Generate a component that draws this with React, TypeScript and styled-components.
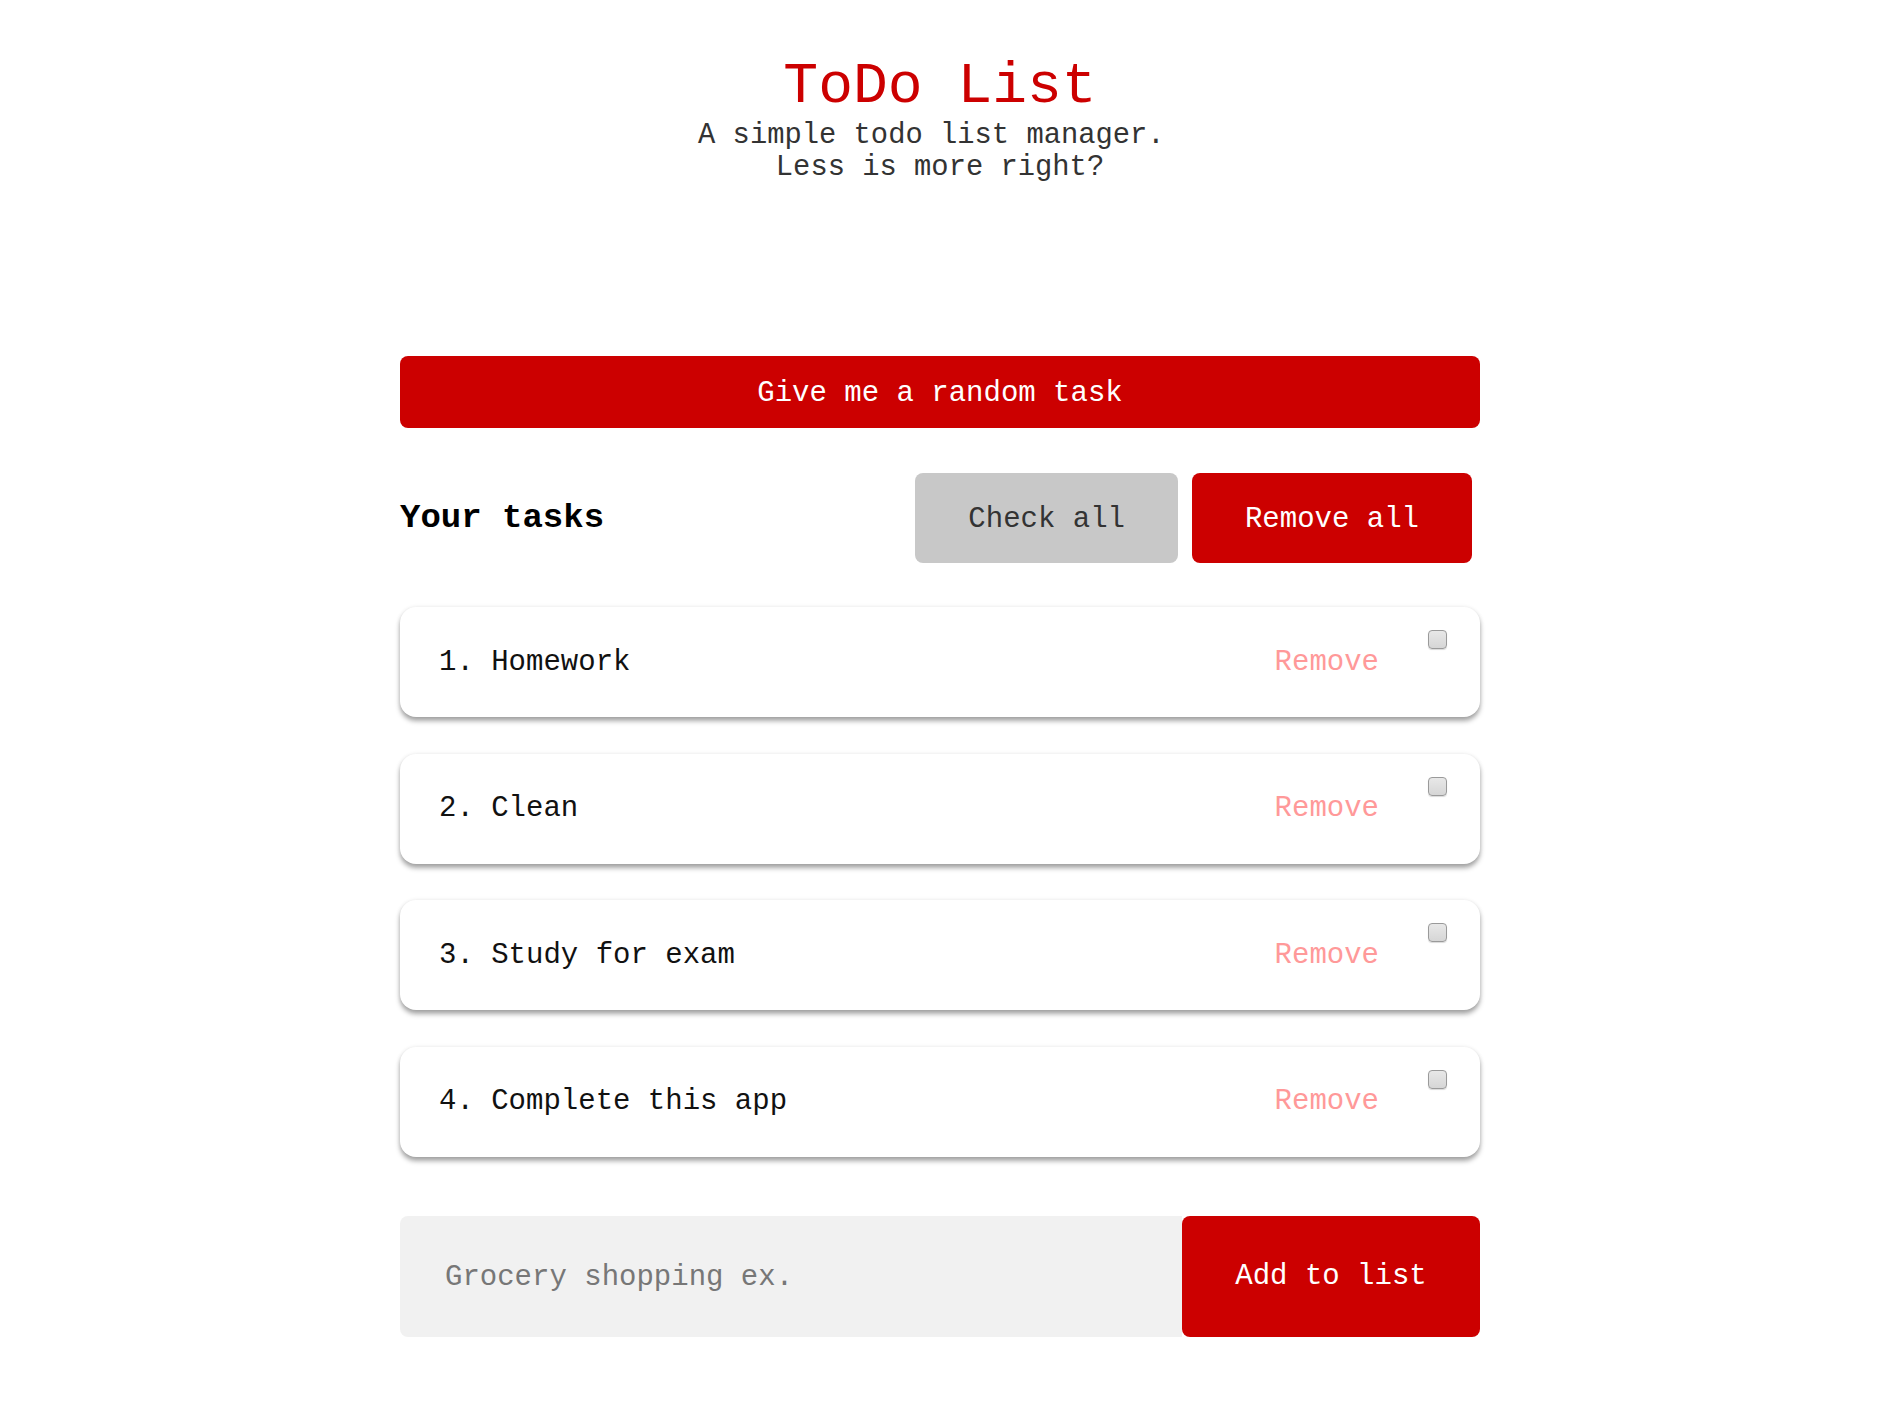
import React, { useState } from "react";
import styled, { createGlobalStyle } from "styled-components";

const RED = "#cc0000";
const FONT = `"Liberation Mono", "DejaVu Sans Mono", monospace`;

const GlobalStyle = createGlobalStyle`
  html, body { margin: 0; padding: 0; background: #ffffff; }
  body { font-family: ${FONT}; color: #222; }
  * { box-sizing: border-box; }
`;

const Page = styled.div`
  width: 1880px;
  padding-top: 54px;
  padding-bottom: 80px;
  display: flex;
  flex-direction: column;
  align-items: center;
`;

const Header = styled.header`
  text-align: center;
  margin-bottom: 172px;
`;

const Title = styled.h1`
  margin: 0;
  font-family: ${FONT};
  font-weight: 400;
  font-size: 58px;
  line-height: 66px;
  color: ${RED};
`;

const Subtitle = styled.p`
  margin: 0;
  font-family: ${FONT};
  font-size: 28.8px;
  line-height: 32px;
  color: #333;
  white-space: pre;
`;

const Main = styled.main`
  width: 1080px;
  display: flex;
  flex-direction: column;
`;

const Button = styled.button<{ $variant?: "primary" | "muted" }>`
  border: none;
  border-radius: 8px;
  font-family: ${FONT};
  font-size: 29px;
  cursor: pointer;
  background: ${(p) => (p.$variant === "muted" ? "#c8c8c8" : RED)};
  color: ${(p) => (p.$variant === "muted" ? "#333" : "#fff")};
`;

const RandomButton = styled(Button)`
  width: 100%;
  height: 72px;
  padding-top: 4px;
  margin-bottom: 45px;
`;

const TasksHeader = styled.div`
  display: flex;
  align-items: center;
  height: 90px;
  margin-bottom: 44px;
`;

const TasksTitle = styled.h2`
  margin: 0;
  flex: 1;
  font-family: ${FONT};
  font-weight: 700;
  font-size: 34px;
  color: #000;
`;

const HeaderButtons = styled.div`
  display: flex;
  gap: 14px;
  margin-right: 8px;
`;

const HeaderButton = styled(Button)`
  height: 90px;
  padding: 2px 53px 0;
`;

const TaskList = styled.ol`
  list-style: none;
  margin: 0 0 59px;
  padding: 0;
  display: flex;
  flex-direction: column;
  gap: 36.5px;
`;

const TaskCard = styled.li`
  height: 110px;
  display: flex;
  align-items: center;
  padding: 0 33px 0 39px;
  background: #fff;
  border-radius: 16px;
  box-shadow: 0 0 4px rgba(0, 0, 0, 0.08), 0 4px 5px rgba(0, 0, 0, 0.35);
`;

const TaskText = styled.span`
  flex: 1;
  font-size: 29px;
  color: #111;
`;

const RemoveLink = styled.button`
  border: none;
  background: none;
  padding: 0;
  font-family: ${FONT};
  font-size: 29px;
  color: #ff9999;
  cursor: pointer;
`;

const Check = styled.input`
  appearance: none;
  align-self: flex-start;
  margin: 23px 0 0 49px;
  width: 19px;
  height: 19px;
  border: 1.5px solid #9a9a9a;
  border-radius: 4px;
  background: linear-gradient(#e8e8e8, #d6d6d6);
  box-shadow: 0 1px 1px rgba(0, 0, 0, 0.15);
  &:checked {
    background: ${RED};
    border-color: ${RED};
  }
`;

const AddForm = styled.form`
  display: flex;
  height: 121px;
`;

const AddInput = styled.input`
  flex: 1;
  border: none;
  outline: none;
  background: #f1f1f1;
  border-radius: 8px 0 0 8px;
  padding: 2px 45px 0;
  font-family: ${FONT};
  font-size: 29px;
  color: #222;
  &::placeholder { color: #777; }
`;

const AddButton = styled(Button)`
  width: 298px;
  height: 100%;
  padding-top: 2px;
`;

const initial = ["Homework", "Clean", "Study for exam", "Complete this app"];

export default function App() {
  const [tasks, setTasks] = useState(initial.map((t) => ({ text: t, done: false })));
  return (
    <>
      <GlobalStyle />
      <Page>
        <Header>
          <Title>ToDo List</Title>
          <Subtitle>{"A simple todo list manager. "}</Subtitle>
          <Subtitle>Less is more right?</Subtitle>
        </Header>
        <Main>
          <RandomButton>Give me a random task</RandomButton>
          <TasksHeader>
            <TasksTitle>Your tasks</TasksTitle>
            <HeaderButtons>
              <HeaderButton $variant="muted">Check all</HeaderButton>
              <HeaderButton>Remove all</HeaderButton>
            </HeaderButtons>
          </TasksHeader>
          <TaskList>
            {tasks.map((t, i) => (
              <TaskCard key={i}>
                <TaskText>{i + 1}. {t.text}</TaskText>
                <RemoveLink>Remove</RemoveLink>
                <Check
                  type="checkbox"
                  checked={t.done}
                  onChange={() =>
                    setTasks((ts) => ts.map((x, j) => (j === i ? { ...x, done: !x.done } : x)))
                  }
                />
              </TaskCard>
            ))}
          </TaskList>
          <AddForm onSubmit={(e) => e.preventDefault()}>
            <AddInput placeholder="Grocery shopping ex." />
            <AddButton type="submit">Add to list</AddButton>
          </AddForm>
        </Main>
      </Page>
    </>
  );
}
